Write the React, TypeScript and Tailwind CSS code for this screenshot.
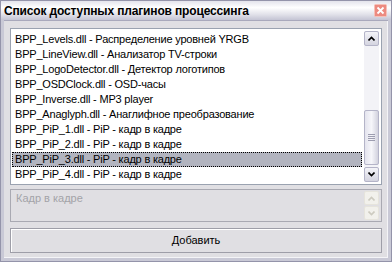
const items = [
  "BPP_Levels.dll - Распределение уровней YRGB",
  "BPP_LineView.dll - Анализатор TV-строки",
  "BPP_LogoDetector.dll - Детектор логотипов",
  "BPP_OSDClock.dll - OSD-часы",
  "BPP_Inverse.dll - MP3 player",
  "BPP_Anaglyph.dll - Анаглифное преобразование",
  "BPP_PiP_1.dll - PiP - кадр в кадре",
  "BPP_PiP_2.dll - PiP - кадр в кадре",
  "BPP_PiP_3.dll - PiP - кадр в кадре",
  "BPP_PiP_4.dll - PiP - кадр в кадре",
];

const selected = 8;

function Chevron({ up, color = "#000" }: { up?: boolean; color?: string }) {
  return (
    <svg width="7" height="5" viewBox="0 0 7 5" className="block">
      <path
        d={up ? "M0.5 4.5 L3.5 1.5 L6.5 4.5" : "M0.5 0.5 L3.5 3.5 L6.5 0.5"}
        fill="none"
        stroke={color}
        strokeWidth="1.6"
      />
    </svg>
  );
}

function ScrollButton({ up }: { up?: boolean }) {
  return (
    <div className="h-[15px] flex items-center justify-center rounded-[2px] border border-[#b4b4c8] bg-gradient-to-b from-[#f4f4f8] to-[#d4d4e0]">
      <Chevron up={up} />
    </div>
  );
}

function CloseButton() {
  return (
    <svg width="13" height="13" viewBox="0 0 13 13" className="block">
      <rect x="0.5" y="0.5" width="12" height="12" rx="1" fill="#ec8a80" stroke="#f6c0b8" />
      <path d="M3.5 3.5 L9.5 9.5 M9.5 3.5 L3.5 9.5" stroke="#fff" strokeWidth="1.8" />
    </svg>
  );
}

export default function App() {
  return (
    <div
      className="w-[392px] h-[262px] bg-[#c9c9d6] border border-[#9494aa] flex flex-col overflow-hidden text-[11px] text-black"
      style={{ fontFamily: '"Liberation Sans", Arial, sans-serif' }}
    >
      {/* title bar */}
      <div className="h-[19px] shrink-0 flex items-center justify-between pl-[3px] pr-[4px] bg-[linear-gradient(to_bottom,#e4e4ec_0%,#ffffff_35%,#e2e2ea_70%,#c4c4d4_100%)]">
        <span className="font-bold text-[12px] leading-none tracking-[-0.15px]">Список доступных плагинов процессинга</span>
        <CloseButton />
      </div>

      {/* window body */}
      <div className="flex-1 mx-[3px] mb-[3px] border-t border-[#a9a9bc] bg-[#e0dfe3] flex flex-col pt-[7px] px-[6px] pb-[5px] shadow-[inset_-1px_-1px_0_#f4f4f7]">
        {/* list box */}
        <div className="h-[157px] shrink-0 border border-[#9aa2b0] bg-white flex pt-[2px] pr-[2px] pb-[2px] pl-[1px]">
          <div className="flex-1 pt-[1px] tracking-[-0.2px]">
            {items.map((t, i) => (
              <div
                key={t}
                className={
                  i === selected
                    ? "h-[15px] leading-[13px] pl-[2px] bg-[#b2b4bf] border border-dotted border-black whitespace-nowrap"
                    : "h-[15px] leading-[15px] pl-[3px] whitespace-nowrap"
                }
              >
                {t}
              </div>
            ))}
          </div>
          <div className="w-[15px] ml-[2px] flex flex-col bg-[#f3f3f7]">
            <ScrollButton up />
            <div className="flex-1 flex flex-col justify-end pb-[2px]">
              <div className="h-[55px] rounded-[2px] border border-[#b4b4c8] bg-[linear-gradient(to_right,#e4e4ee,#f6f6fa_50%,#d2d2de)] flex flex-col items-center justify-center gap-[1px]">
                <div className="w-[7px] h-px bg-[#9d9db0]" />
                <div className="w-[7px] h-px bg-[#9d9db0]" />
                <div className="w-[7px] h-px bg-[#9d9db0]" />
                <div className="w-[7px] h-px bg-[#9d9db0]" />
              </div>
            </div>
            <ScrollButton />
          </div>
        </div>

        {/* description */}
        <div className="mt-[4px] h-[33px] shrink-0 border border-[#a9a9b2] flex pr-[2px] pt-[1px]">
          <div className="flex-1 pl-[5px] pt-[1px] text-[#a3a3a8] leading-[13px]">Кадр в кадре</div>
          <div className="w-[15px] flex flex-col gap-[1px]">
            <div className="h-[14px] flex items-center justify-center rounded-[2px] border border-[#e6e4dc] bg-[#f2f1ec]">
              <Chevron up color="#cdcbc0" />
            </div>
            <div className="h-[14px] flex items-center justify-center rounded-[2px] border border-[#e6e4dc] bg-[#f2f1ec]">
              <Chevron color="#cdcbc0" />
            </div>
          </div>
        </div>

        {/* add button */}
        <button className="mt-[6px] h-[25px] shrink-0 border border-[#9e9ea8] bg-[#e0dfe3] shadow-[inset_1px_1px_0_#ffffff] text-[11px] text-black">
          Добавить
        </button>
      </div>
    </div>
  );
}
